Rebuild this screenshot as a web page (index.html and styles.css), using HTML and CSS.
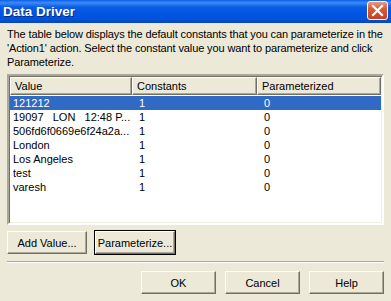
FILE: index.html
```html
<!DOCTYPE html>
<html lang="en">
<head>
    <meta charset="UTF-8">
    <title>Data Driver</title>
    <link rel="stylesheet" href="styles.css">
</head>
<body>
    <div class="dialog">
        <!-- Title bar -->
        <div class="titlebar">
            <span class="title">Data Driver</span>
            <button class="close-btn" aria-label="Close">
                <svg width="13" height="13" viewBox="0 0 13 13">
                    <path d="M2 2 L11 11 M11 2 L2 11" stroke="#fff" stroke-width="2.2" stroke-linecap="square"/>
                </svg>
            </button>
        </div>

        <div class="content">
            <p class="desc">The table below displays the default constants that you can parameterize in the 'Action1' action. Select the constant value you want to parameterize and click Parameterize.</p>

            <!-- List view -->
            <div class="list">
                <div class="list-head">
                    <div class="col col-value">Value</div>
                    <div class="col col-const">Constants</div>
                    <div class="col col-param">Parameterized</div>
                </div>
                <div class="row selected"><span class="col col-value">121212</span><span class="col col-const">1</span><span class="col col-param">0</span></div>
                <div class="row"><span class="col col-value">19097&nbsp;&nbsp;&nbsp;LON&nbsp;&nbsp;&nbsp;12:48 P...</span><span class="col col-const">1</span><span class="col col-param">0</span></div>
                <div class="row"><span class="col col-value">506fd6f0669e6f24a2a...</span><span class="col col-const">1</span><span class="col col-param">0</span></div>
                <div class="row"><span class="col col-value">London</span><span class="col col-const">1</span><span class="col col-param">0</span></div>
                <div class="row"><span class="col col-value">Los Angeles</span><span class="col col-const">1</span><span class="col col-param">0</span></div>
                <div class="row"><span class="col col-value">test</span><span class="col col-const">1</span><span class="col col-param">0</span></div>
                <div class="row"><span class="col col-value">varesh</span><span class="col col-const">1</span><span class="col col-param">0</span></div>
            </div>

            <div class="list-actions">
                <button class="btn btn-add">Add Value...</button>
                <button class="btn btn-param default">Parameterize...</button>
            </div>

            <div class="separator"></div>

            <div class="dialog-actions">
                <button class="btn btn-wide">OK</button>
                <button class="btn btn-wide">Cancel</button>
                <button class="btn btn-wide">Help</button>
            </div>
        </div>
    </div>
</body>
</html>
```

FILE: styles.css
```css
body {
    margin: 0;
    font-family: 'Liberation Sans', Arial, sans-serif;
    font-size: 11px;
    background-color: #ece9d8;
}
.dialog {
    width: 391px;
    height: 301px;
    background: #ece9d8;
    overflow: hidden;
}
.titlebar {
    height: 23px;
    display: flex;
    align-items: center;
    justify-content: space-between;
    padding: 0 3px 0 3px;
    background: linear-gradient(to bottom, #0a5fe8 0%, #3d8bf7 12%, #0b5ce6 30%, #0054e3 60%, #0252d8 85%, #0846b8 100%);
}
.title {
    color: #fff;
    font-weight: bold;
    font-size: 13.5px;
    text-shadow: 1px 1px 0 #0a2a7a;
}
.close-btn {
    width: 21px;
    height: 19px;
    margin-top: -2px;
    padding: 0;
    display: flex;
    align-items: center;
    justify-content: center;
    border: 1px solid #fff;
    border-radius: 3px;
    background: linear-gradient(to bottom, #e89a7e 0%, #dd5a35 40%, #c8411e 100%);
}
.content {
    padding: 4px 7px 0 7px;
}
.desc {
    margin: 0 -4px 5px 0;
    line-height: 14px;
    letter-spacing: -0.12px;
    color: #000;
}
.list {
    height: 146px;
    background: #fff;
    border-style: solid;
    border-width: 2px;
    border-color: #aca899 #fff #fff #aca899;
    box-shadow: inset 1px 1px 0 #716f64, inset -1px -1px 0 #f1efe2;
    padding: 1px 1px 0 1px;
}
.list-head {
    display: flex;
    height: 18px;
    margin-bottom: 1px;
}
.list-head .col {
    background: #ece9d8;
    border-style: solid;
    border-width: 1px;
    border-color: #fff #716f64 #716f64 #fff;
    box-shadow: inset -1px -1px 0 #aca899;
    line-height: 16px;
    padding-left: 4px;
}
.col {
    box-sizing: border-box;
    white-space: nowrap;
    overflow: hidden;
}
.col-value {
    width: 122px;
}
.col-const {
    width: 125px;
}
.col-param {
    width: 124px;
}
.row {
    display: flex;
    height: 14px;
    line-height: 14px;
    color: #000;
}
.row .col {
    padding-left: 3px;
}
.row .col-const,
.row .col-param {
    padding-left: 7px;
}
.row.selected {
    background: #316ac5;
    color: #fff;
}
.btn {
    font-family: 'Liberation Sans', Arial, sans-serif;
    font-size: 11px;
    color: #000;
    background: #ece9d8;
    border-style: solid;
    border-width: 1px;
    border-color: #fff #716f64 #716f64 #fff;
    box-shadow: inset -1px -1px 0 #aca899;
    padding: 0;
    height: 23px;
}
.btn.default {
    outline: 1px solid #000;
}
.list-actions {
    display: flex;
    gap: 8px;
    margin-top: 6px;
}
.btn-add {
    width: 80px;
}
.btn-param {
    width: 80px;
}
.separator {
    margin-top: 7px;
    height: 0;
    border-top: 1px solid #aca899;
    border-bottom: 1px solid #fff;
}
.dialog-actions {
    display: flex;
    justify-content: flex-end;
    gap: 9px;
    margin-top: 8px;
}
.btn-wide {
    width: 75px;
}
```
